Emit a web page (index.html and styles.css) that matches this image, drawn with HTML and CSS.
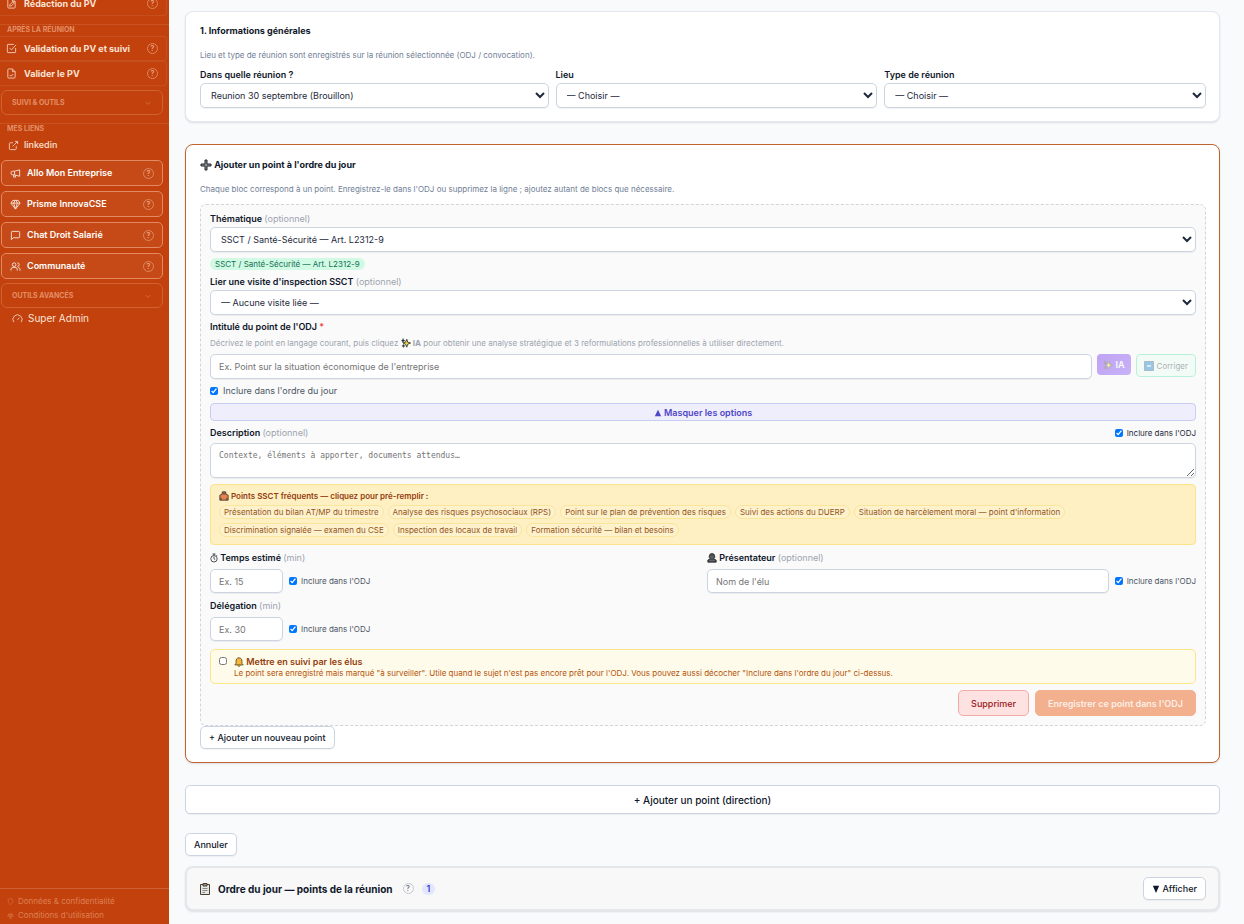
FILE: index.html
```html
<!DOCTYPE html>
<html lang="fr">
<head>
    <meta charset="UTF-8">
    <meta name="viewport" content="width=device-width, initial-scale=1.0">
    <title>Ordre du jour</title>
    <link rel="stylesheet" href="styles.css">
</head>
<body>
    <aside class="sidebar">
        <nav class="nav">
            <a class="nav-item" href="#">
                <svg class="icon" viewBox="0 0 24 24"><path d="M14 2H6a2 2 0 0 0-2 2v16a2 2 0 0 0 2 2h12a2 2 0 0 0 2-2V8z"/><path d="M14 2v6h6M8 18l1-4 6-6 3 3-6 6z"/></svg>
                <span>Rédaction du PV</span><span class="help">?</span>
            </a>
            <div class="nav-title">Après la réunion</div>
            <a class="nav-item" href="#">
                <svg class="icon" viewBox="0 0 24 24"><path d="M21 11v9a1 1 0 0 1-1 1H4a1 1 0 0 1-1-1V4a1 1 0 0 1 1-1h13"/><path d="M8 11l4 4L22 4"/></svg>
                <span>Validation du PV et suivi</span><span class="help">?</span>
            </a>
            <a class="nav-item" href="#">
                <svg class="icon" viewBox="0 0 24 24"><path d="M14 2H6a2 2 0 0 0-2 2v16a2 2 0 0 0 2 2h12a2 2 0 0 0 2-2V8z"/><path d="M14 2v6h6M8 15l3 3 5-5"/></svg>
                <span>Valider le PV</span><span class="help">?</span>
            </a>
            <button class="nav-group" type="button">Suivi &amp; outils
                <svg class="chevron" viewBox="0 0 24 24"><path d="M5 9l7 7 7-7"/></svg>
            </button>
            <div class="nav-title">Mes liens</div>
            <a class="nav-link" href="#">
                <svg class="icon" viewBox="0 0 24 24"><path d="M18 13v6a2 2 0 0 1-2 2H5a2 2 0 0 1-2-2V8a2 2 0 0 1 2-2h6M15 3h6v6M10 14L21 3"/></svg>
                <span>linkedin</span>
            </a>
            <a class="nav-box" href="#">
                <svg class="icon" viewBox="0 0 24 24"><path d="M21 4v14l-11-3H6a4 4 0 0 1 0-8h4zM10 7v8M8 15v5h4v-4"/></svg>
                <span>Allo Mon Entreprise</span><span class="help">?</span>
            </a>
            <a class="nav-box" href="#">
                <svg class="icon" viewBox="0 0 24 24"><path d="M6 3h12l4 6-10 13L2 9zM2 9h20M11 3L8 9l4 13 4-13-3-6"/></svg>
                <span>Prisme InnovaCSE</span><span class="help">?</span>
            </a>
            <a class="nav-box" href="#">
                <svg class="icon" viewBox="0 0 24 24"><path d="M21 15a2 2 0 0 1-2 2H7l-4 4V5a2 2 0 0 1 2-2h14a2 2 0 0 1 2 2z"/></svg>
                <span>Chat Droit Salarié</span><span class="help">?</span>
            </a>
            <a class="nav-box" href="#">
                <svg class="icon" viewBox="0 0 24 24"><circle cx="9" cy="8" r="4"/><path d="M2 21v-2a5 5 0 0 1 5-5h4a5 5 0 0 1 5 5v2M16 4a4 4 0 0 1 0 8M18 14a5 5 0 0 1 4 5v2"/></svg>
                <span>Communauté</span><span class="help">?</span>
            </a>
            <button class="nav-group" type="button">Outils avancés
                <svg class="chevron" viewBox="0 0 24 24"><path d="M5 9l7 7 7-7"/></svg>
            </button>
            <a class="nav-link nav-admin" href="#">
                <svg class="icon" viewBox="0 0 24 24"><path d="M4 20a10 10 0 1 1 16 0M12 15l4-5"/></svg>
                <span>Super Admin</span>
            </a>
        </nav>
        <div class="sidebar-footer">
            <a href="#"><svg class="icon-small" viewBox="0 0 24 24"><path d="M12 2l8 3v7c0 5-4 8-8 10-4-2-8-5-8-10V5z"/></svg>Données &amp; confidentialité</a>
            <a href="#"><svg class="icon-small" viewBox="0 0 24 24"><path d="M12 3v18M6 21h12M3 7h18M6 7l-4 8h8zM18 7l-4 8h8z"/></svg>Conditions d'utilisation</a>
        </div>
    </aside>

    <main class="main">
        <section class="card">
            <h2>1. Informations générales</h2>
            <p class="intro">Lieu et type de réunion sont enregistrés sur la réunion sélectionnée (ODJ / convocation).</p>
            <div class="meeting-grid">
                <div class="field">
                    <label for="reunion">Dans quelle réunion ?</label>
                    <select id="reunion"><option>Reunion 30 septembre (Brouillon)</option></select>
                </div>
                <div class="field">
                    <label for="lieu">Lieu</label>
                    <select id="lieu"><option>— Choisir —</option></select>
                </div>
                <div class="field">
                    <label for="type">Type de réunion</label>
                    <select id="type"><option>— Choisir —</option></select>
                </div>
            </div>
        </section>

        <section class="card card-active">
            <h2>
                <svg class="emoji-large" viewBox="0 0 24 24"><path d="M10 2h4v8h8v4h-8v8h-4v-8H2v-4h8z" fill="#8b8f92" stroke="#20272c" stroke-width="2"/></svg>
                Ajouter un point à l'ordre du jour
            </h2>
            <p class="intro">Chaque bloc correspond à un point. Enregistrez-le dans l'ODJ ou supprimez la ligne ; ajoutez autant de blocs que nécessaire.</p>

            <form class="point">
                <div class="field">
                    <label for="theme">Thématique <span class="optional">(optionnel)</span></label>
                    <select id="theme"><option>SSCT / Santé-Sécurité — Art. L2312-9</option></select>
                </div>
                <span class="theme-badge">SSCT / Santé-Sécurité — Art. L2312-9</span>
                <div class="field">
                    <label for="visite">Lier une visite d'inspection SSCT <span class="optional">(optionnel)</span></label>
                    <select id="visite"><option>— Aucune visite liée —</option></select>
                </div>
                <label for="titre">Intitulé du point de l'ODJ <span class="required">*</span></label>
                <p class="hint">Décrivez le point en langage courant, puis cliquez
                    <svg class="emoji" viewBox="0 0 24 24"><path d="M14 3l2 7 7 2-7 3-2 7-3-7-6-3 6-2z" fill="#f5d33f" stroke="#26302b" stroke-width="2"/><path d="M5 1l1 4 4 1-4 2-1 4-2-4-2-2 3-1zM6 15l1 3 3 1-3 1-1 3-1-3-3-1 3-1z" fill="#26302b" stroke="#26302b"/></svg>
                    <strong>IA</strong> pour obtenir une analyse stratégique et 3 reformulations professionnelles à utiliser directement.</p>
                <div class="title-row">
                    <input type="text" id="titre" placeholder="Ex. Point sur la situation économique de l'entreprise">
                    <button type="button" class="btn-ai" disabled>
                        <svg class="emoji" viewBox="0 0 24 24"><path d="M14 3l2 7 7 2-7 3-2 7-3-7-6-3 6-2z" fill="#ffe34a" stroke="#4b4a50" stroke-width="2"/><path d="M5 1l1 4 4 1-4 2-1 4-2-4-2-2 3-1zM6 15l1 3 3 1-3 1-1 3-1-3-3-1 3-1z" fill="#4b4a50" stroke="#4b4a50"/></svg>
                        IA
                    </button>
                    <button type="button" class="btn-fix" disabled>
                        <svg class="emoji" viewBox="0 0 24 24"><path d="M1 1h22v22H1z" fill="#258bd2" stroke="#456" stroke-width="2"/><path d="M7 12h10" stroke="#fff" stroke-width="3"/></svg>
                        Corriger
                    </button>
                </div>
                <label class="check" for="inclure">
                    <input type="checkbox" id="inclure" checked> Inclure dans l'ordre du jour
                </label>
                <button type="button" class="btn-options"><svg class="triangle" viewBox="0 0 10 10"><path d="M5 1l4 8H1z"/></svg> Masquer les options</button>

                <div class="description-head">
                    <label for="description">Description <span class="optional">(optionnel)</span></label>
                    <label class="check check-small check-dark" for="inclure-desc"><input type="checkbox" id="inclure-desc" checked>Inclure dans l'ODJ</label>
                </div>
                <textarea id="description" placeholder="Contexte, éléments à apporter, documents attendus…"></textarea>

                <div class="suggestions">
                    <p class="suggestions-title">
                        <svg class="emoji" viewBox="0 0 24 24"><path d="M2 10l5-2 1-6h8l1 6 5 2v12H2z" fill="#e8854f" stroke="#3d3632" stroke-width="2"/><path d="M10 3v6M14 3v6M5 16v6M19 16v6" fill="none" stroke="#3d3632" stroke-width="2"/></svg>
                        Points SSCT fréquents — cliquez pour pré-remplir :
                    </p>
                    <div class="pills">
                        <button type="button" class="pill">Présentation du bilan AT/MP du trimestre</button>
                        <button type="button" class="pill">Analyse des risques psychosociaux (RPS)</button>
                        <button type="button" class="pill">Point sur le plan de prévention des risques</button>
                        <button type="button" class="pill">Suivi des actions du DUERP</button>
                        <button type="button" class="pill">Situation de harcèlement moral — point d'information</button>
                        <button type="button" class="pill">Discrimination signalée — examen du CSE</button>
                        <button type="button" class="pill">Inspection des locaux de travail</button>
                        <button type="button" class="pill">Formation sécurité — bilan et besoins</button>
                    </div>
                </div>

                <div class="details-grid">
                    <div class="detail">
                        <label for="temps">
                            <svg class="emoji-narrow" viewBox="0 0 20 24"><circle cx="10" cy="14" r="8" fill="none" stroke="#222b35" stroke-width="2"/><path d="M6 2h8M10 2v4M10 9v5l3 2M16 5l2 2" fill="none" stroke="#222b35" stroke-width="2"/></svg>
                            Temps estimé <span class="optional">(min)</span>
                        </label>
                        <div class="detail-row">
                            <input type="text" class="minutes" id="temps" placeholder="Ex. 15">
                            <label class="check check-small" for="inclure-temps"><input type="checkbox" id="inclure-temps" checked>Inclure dans l'ODJ</label>
                        </div>
                    </div>
                    <div class="detail">
                        <label for="presentateur">
                            <svg class="emoji" viewBox="0 0 24 24"><path d="M2 22v-5l6-3-3-4 2-7 5-2 5 2 2 7-3 4 6 3v5z" fill="#4b4d50" stroke="#25282b" stroke-width="2"/><path d="M8 8h8M9 12h6M6 18h12" stroke="#8b8d8f" stroke-width="1"/></svg>
                            Présentateur <span class="optional">(optionnel)</span>
                        </label>
                        <div class="detail-row">
                            <input type="text" id="presentateur" placeholder="Nom de l'élu">
                            <label class="check check-small" for="inclure-pres"><input type="checkbox" id="inclure-pres" checked>Inclure dans l'ODJ</label>
                        </div>
                    </div>
                    <div class="detail">
                        <label for="delegation">Délégation <span class="optional">(min)</span></label>
                        <div class="detail-row">
                            <input type="text" class="minutes" id="delegation" placeholder="Ex. 30">
                            <label class="check check-small" for="inclure-deleg"><input type="checkbox" id="inclure-deleg" checked>Inclure dans l'ODJ</label>
                        </div>
                    </div>
                </div>

                <label class="follow" for="suivi">
                    <input type="checkbox" id="suivi">
                    <span>
                        <strong><svg class="emoji" viewBox="0 0 24 24"><path d="M12 2c-5 0-7 4-7 8v5l-3 4h20l-3-4v-5c0-4-2-8-7-8z" fill="#f6b93b" stroke="#59451d" stroke-width="2"/><path d="M9 20c0 3 6 3 6 0" fill="#f6b93b" stroke="#59451d" stroke-width="2"/></svg>
                        Mettre en suivi par les élus</strong>
                        <small>Le point sera enregistré mais marqué "à surveiller". Utile quand le sujet n'est pas encore prêt pour l'ODJ. Vous pouvez aussi décocher "Inclure dans l'ordre du jour" ci-dessus.</small>
                    </span>
                </label>

                <div class="actions">
                    <button type="button" class="btn-delete">Supprimer</button>
                    <button type="submit" class="btn-save" disabled>Enregistrer ce point dans l'ODJ</button>
                </div>
            </form>
            <button type="button" class="btn">+ Ajouter un nouveau point</button>
        </section>

        <button type="button" class="btn btn-wide">+ Ajouter un point (direction)</button>
        <button type="button" class="btn btn-cancel">Annuler</button>

        <section class="card agenda">
            <svg class="clipboard" viewBox="0 0 24 26"><path d="M3 4h18v20H3z" fill="#e4e6e3" stroke="#4a4032" stroke-width="2"/><path d="M8 2h8v5H8z" fill="#8c8f8e" stroke="#4a4032" stroke-width="2"/><path d="M7 12h10M7 16h10M7 20h5" stroke="#888" stroke-width="2"/></svg>
            <h3>Ordre du jour — points de la réunion</h3>
            <span class="help help-grey">?</span>
            <span class="count">1</span>
            <button type="button" class="btn btn-show"><svg class="triangle" viewBox="0 0 10 10"><path d="M1 1h8L5 10z"/></svg> Afficher</button>
        </section>
    </main>
</body>
</html>
```
FILE: styles.css
```css
* {
    box-sizing: border-box;
}

body {
    margin: 0;
    height: 100vh;
    display: flex;
    overflow: hidden;
    background: #f9fafc;
    color: #0f172a;
    font-family: Inter, "Liberation Sans", sans-serif;
    font-size: 9px;
    line-height: 12px;
}

button, input, select {
    font-family: inherit;
}

button {
    cursor: pointer;
}

h2, h3, p {
    margin: 0;
}

a {
    color: inherit;
    text-decoration: none;
}

/* Sidebar */
.sidebar {
    width: 169px;
    flex-shrink: 0;
    display: flex;
    flex-direction: column;
    background: #c2410c;
    color: #fbe3d6;
}

.nav {
    flex: 1;
    display: flex;
    flex-direction: column;
    margin-top: -9px;
}

.icon, .icon-small, .chevron {
    width: 11px;
    height: 11px;
    flex-shrink: 0;
    fill: none;
    stroke: currentColor;
    stroke-width: 2;
    opacity: 0.85;
}

.nav-item {
    height: 25px;
    margin-right: 2px;
    padding: 0 8px 0 6px;
    display: flex;
    align-items: center;
    gap: 7px;
    border: 1px solid rgba(255, 255, 255, 0.08);
    border-left: 0;
    border-radius: 0 4px 4px 0;
    font-weight: 700;
}

.help {
    width: 11px;
    height: 11px;
    margin-left: auto;
    flex-shrink: 0;
    border: 1px solid #e0875f;
    border-radius: 50%;
    color: #eda788;
    font-size: 7px;
    font-weight: 600;
    line-height: 9px;
    text-align: center;
}

.nav-title {
    height: 12px;
    margin-top: 8px;
    padding-left: 7px;
    border-top: 1px solid rgba(255, 255, 255, 0.1);
    color: #e48f68;
    font-size: 7px;
    font-weight: 700;
    line-height: 10px;
    text-transform: uppercase;
}

.nav-group {
    height: 25px;
    margin: 4px 6px 0 1px;
    padding: 0 10px;
    display: flex;
    align-items: center;
    justify-content: space-between;
    background: none;
    border: 1px solid #d0632f;
    border-radius: 6px;
    color: #e48f68;
    font-size: 7px;
    font-weight: 700;
    text-transform: uppercase;
}

.chevron {
    width: 8px;
    height: 8px;
}

.nav-link {
    height: 20px;
    padding-left: 8px;
    display: flex;
    align-items: center;
    gap: 5px;
    font-weight: 500;
}

.nav-box {
    height: 26px;
    margin: 5px 6px 0 1px;
    padding: 0 8px;
    display: flex;
    align-items: center;
    gap: 6px;
    background: #c54a17;
    border: 1px solid #e38a63;
    border-radius: 5px;
    color: #fff;
    font-weight: 600;
}

.nav-admin {
    padding-left: 12px;
    font-size: 10px;
    font-weight: 400;
}

.sidebar-footer {
    padding: 5px 7px 2px;
    display: flex;
    flex-direction: column;
    border-top: 1px solid #cd6034;
    color: #de8055;
    font-size: 8px;
    line-height: 14px;
}

.sidebar-footer a {
    display: flex;
    align-items: center;
    gap: 4px;
}

.icon-small {
    width: 7px;
    height: 7px;
}

/* Content */
.main {
    flex: 1;
    min-width: 0;
    padding: 11px 24px 12px 16px;
    display: flex;
    flex-direction: column;
    align-items: stretch;
}

.card {
    margin-bottom: 22px;
    padding: 12px 13px 13px 14px;
    background: #fff;
    border: 1px solid #e2e8f0;
    border-radius: 8px;
    box-shadow: 0 1px 2px rgba(15, 23, 42, 0.12);
}

.card-active {
    padding-top: 13px;
    border-color: #c2622c;
}

h2 {
    font-size: 9px;
    line-height: 14px;
    font-weight: 700;
}

.intro {
    margin: 11px 0 8px;
    color: #718096;
    font-size: 8px;
}

.card-active .intro {
    margin-bottom: 9px;
}

.emoji, .emoji-large, .emoji-narrow {
    width: 10px;
    height: 10px;
    flex-shrink: 0;
    vertical-align: -2px;
}

.emoji-large {
    width: 12px;
    height: 12px;
    vertical-align: -3px;
}

.emoji-narrow {
    width: 8px;
}

label {
    font-weight: 600;
}

.optional {
    color: #9ca3af;
    font-weight: 400;
}

.required {
    color: #ef4444;
}

.field {
    display: flex;
    flex-direction: column;
    gap: 2px;
}

.meeting-grid {
    display: grid;
    grid-template-columns: 13fr 12fr 12fr;
    gap: 7px;
}

select, input[type="text"], textarea {
    width: 100%;
    height: 25px;
    margin: 0;
    padding: 0 8px;
    background: #fff;
    border: 1px solid #cbd5e1;
    border-radius: 5px;
    color: #1e293b;
    font-size: 9px;
    box-shadow: 0 1px 1px rgba(15, 23, 42, 0.06);
}

select {
    padding: 0 3px 0 6px;
}

::placeholder {
    color: #757575;
}

.point {
    padding: 8px 9px 9px;
    display: flex;
    flex-direction: column;
    background: #fafafa;
    border: 1px dashed #d1d5db;
    border-radius: 6px;
}

.point > .field {
    margin-bottom: 6px;
}

.theme-badge {
    align-self: flex-start;
    margin-bottom: 6px;
    padding: 0 5px;
    background: #d1fae5;
    border-radius: 6px;
    color: #166f53;
    font-size: 8px;
}

.hint {
    margin: 4px 0 5px;
    color: #9ca3af;
    font-size: 8px;
}

.title-row {
    display: flex;
    align-items: flex-start;
    gap: 5px;
}

.title-row input[type="text"] {
    flex: 1;
}

.btn-ai, .btn-fix {
    height: 21px;
    padding: 0 6px;
    display: flex;
    align-items: center;
    gap: 3px;
    border: 0;
    border-radius: 4px;
    background: linear-gradient(135deg, #7c3aed, #8b5cf6);
    color: #fff;
    font-size: 9px;
    font-weight: 600;
    opacity: 0.45;
}

.btn-fix {
    height: 23px;
    padding: 0 7px;
    background: #ecfdf5;
    border: 1px solid #6ee7b7;
    color: #4b5563;
    font-size: 8px;
    font-weight: 400;
}

.check {
    display: flex;
    align-items: center;
    gap: 5px;
    color: #4b5563;
    font-weight: 400;
    white-space: nowrap;
}

.check-small {
    gap: 4px;
    font-size: 8px;
}

.point > .check {
    margin: 6px 0;
}

.check-dark {
    color: #1e293b;
}

input[type="checkbox"] {
    width: 8px;
    height: 8px;
    margin: 0;
    flex-shrink: 0;
}

.btn-options {
    height: 18px;
    padding: 0;
    background: #eeeefc;
    border: 1px solid #c9cdf3;
    border-radius: 4px;
    color: #4f46c8;
    font-size: 9px;
    font-weight: 600;
}

.triangle {
    width: 8px;
    height: 8px;
    fill: currentColor;
    vertical-align: -1px;
}

.description-head {
    margin: 6px 0 4px;
    display: flex;
    justify-content: space-between;
}

textarea {
    height: 35px;
    padding: 6px 8px;
    font-family: "DejaVu Sans Mono", monospace;
    font-size: 8px;
    line-height: 12px;
    resize: vertical;
}

.suggestions {
    margin: 6px 0 7px;
    padding: 5px 8px 7px;
    background: #fef0c3;
    border: 1px solid #fbe38a;
    border-radius: 4px;
    color: #92400e;
}

.suggestions-title {
    font-size: 8px;
    font-weight: 600;
}

.pills {
    margin-top: 3px;
    display: flex;
    flex-wrap: wrap;
    gap: 4px;
}

.pill {
    height: 14px;
    padding: 0 4px;
    background: #fef2cc;
    border: 1px solid #fbe59a;
    border-radius: 7px;
    color: #92541c;
    font-size: 8px;
    line-height: 12px;
}

.details-grid {
    display: grid;
    grid-template-columns: 1fr 1fr;
    gap: 7px 8px;
}

.detail > label {
    display: block;
    margin-bottom: 5px;
}

.detail-row {
    display: flex;
    align-items: center;
    gap: 6px;
}

.detail-row input[type="text"] {
    height: 24px;
}

.detail-row .minutes {
    width: 73px;
}

.follow {
    margin: 8px 0 6px;
    padding: 6px 8px 5px;
    display: flex;
    gap: 7px;
    background: #fffbeb;
    border: 1px solid #fde68a;
    border-radius: 5px;
    color: #92400e;
    font-weight: 400;
}

.follow input[type="checkbox"] {
    margin-top: 1px;
}

.follow strong, .follow small {
    display: block;
    font-weight: 600;
}

.follow small {
    color: #b45309;
    font-size: 8px;
    line-height: 10px;
    font-weight: 400;
}

.actions {
    display: flex;
    justify-content: flex-end;
    gap: 6px;
}

.btn-delete, .btn-save {
    height: 26px;
    padding: 0 12px;
    background: #fee2e2;
    border: 1px solid #f5aaaa;
    border-radius: 5px;
    color: #991b1b;
    font-size: 9px;
    font-weight: 500;
}

.btn-save {
    background: #f2b08e;
    border-color: #f2b08e;
    color: #fdeee6;
    font-weight: 600;
}

.btn {
    height: 23px;
    padding: 0 8px;
    background: #fff;
    border: 1px solid #cbd5e1;
    border-radius: 5px;
    color: #0f172a;
    font-size: 9px;
    font-weight: 500;
    box-shadow: 0 1px 1px rgba(15, 23, 42, 0.05);
}

.btn-wide {
    height: 29px;
    flex-shrink: 0;
    font-size: 10px;
}

.btn-cancel {
    margin: 19px 0 10px;
    align-self: flex-start;
    flex-shrink: 0;
}

.agenda {
    margin: 0;
    padding: 9px 12px;
    display: flex;
    align-items: center;
    background: #f8f8f8;
    border: 2px solid #e5e7eb;
}

.clipboard {
    width: 12px;
    height: 14px;
    margin-right: 7px;
}

h3 {
    font-size: 10px;
    font-weight: 700;
}

.help-grey {
    margin: 0 8px 0 10px;
    border-color: #c4c8ce;
    color: #6b7280;
}

.count {
    padding: 0 5px;
    background: #e0e7ff;
    border-radius: 6px;
    color: #4338ca;
    font-weight: 600;
}

.btn-show {
    margin-left: auto;
}
```
